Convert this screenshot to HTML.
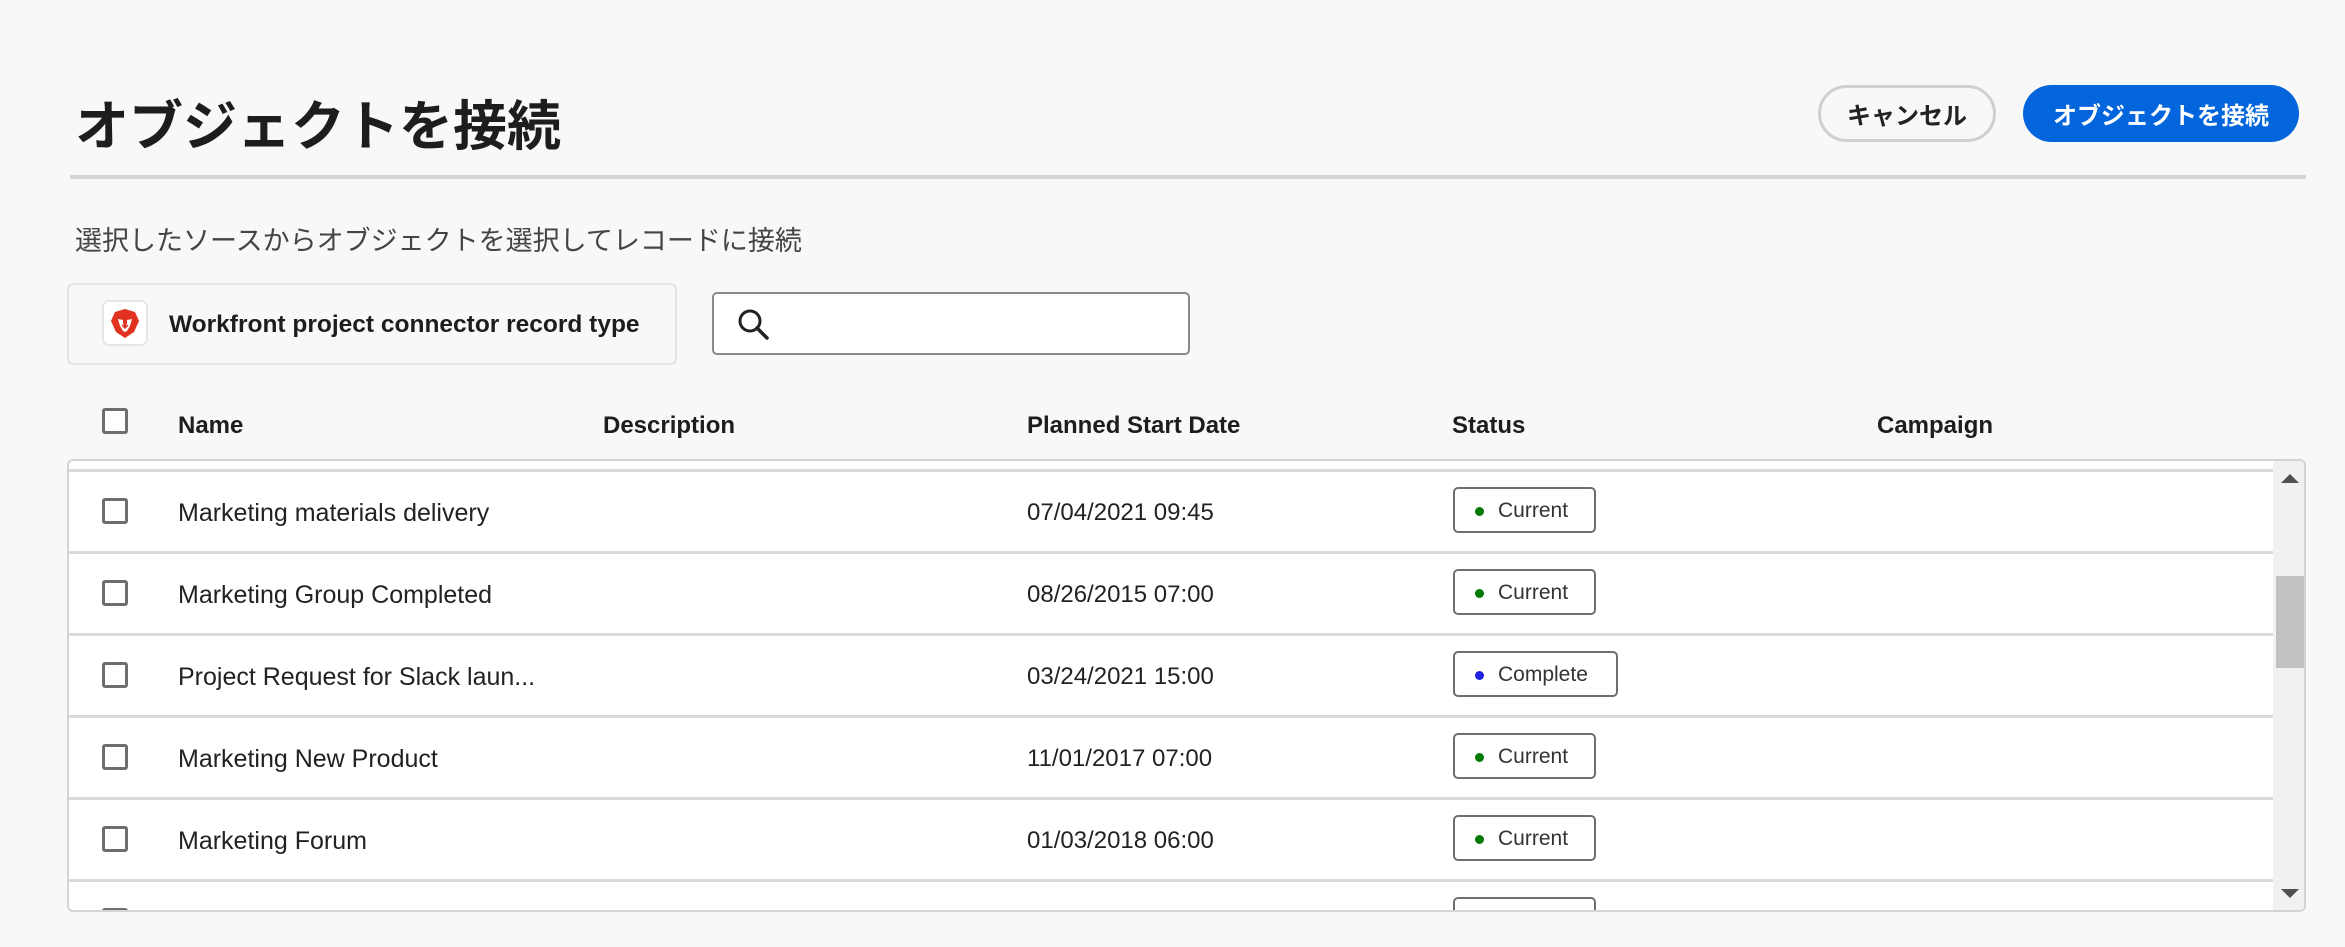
<!DOCTYPE html>
<html><head><meta charset="utf-8"><style>
*{margin:0;padding:0;box-sizing:border-box}
body{width:2345px;height:947px;background:#f8f8f8;font-family:"Liberation Sans","Noto Sans CJK JP",sans-serif;color:#222;position:relative;overflow:hidden}
.a{position:absolute}
.title{left:75px;top:92px;font-size:54px;font-weight:bold;color:#1d1d1d;line-height:70px;letter-spacing:0px}
.btn{top:85px;height:57px;border-radius:29px;font-weight:bold;font-size:24px;display:flex;align-items:center;justify-content:center}
.cancel{left:1818px;width:178px;border:3px solid #d0d0d0;background:#f8f8f8;color:#222}
.prim{left:2023px;width:276px;background:#0265dc;color:#fff}
.hr{left:70px;top:175px;width:2236px;height:4px;background:#d6d6d6}
.sub{left:75px;top:224px;font-size:27px;color:#444;line-height:34px}
.src{left:67px;top:283px;width:610px;height:82px;border:2px solid #e4e4e4;border-radius:6px;background:#f8f8f8}
.ico{left:33px;top:15px;width:46px;height:46px;border:2px solid #e6e6e6;border-radius:7px;background:#fff}
.srct{left:100px;top:1px;line-height:78px;font-size:24.5px;font-weight:bold;color:#1d1d1d}
.search{left:712px;top:292px;width:478px;height:63px;border:2px solid #8a8a8a;border-radius:5px;background:#fff}
.cb{width:26px;height:26px;border:3px solid #6e6e6e;border-radius:3px;background:#fff}
.th{top:411px;font-size:24px;font-weight:bold;color:#1d1d1d;line-height:30px}
.tbl{left:67px;top:459px;width:2239px;height:453px;border:2px solid #d4d4d4;border-radius:6px;background:#fff;overflow:hidden}
.line{left:0;width:2204px;height:3px;background:#dadada}
.name,.date{font-size:25px;color:#222;line-height:30px}
.date{font-size:24px}
.badge{height:46px;border:2px solid #6e6e6e;border-radius:5px;background:#fff;font-size:21px;color:#333;display:flex;align-items:center;padding-left:20px;padding-top:2px}
.dot{width:9px;height:9px;border-radius:50%;margin-right:14px}
.sb{left:2204px;top:0;width:35px;height:453px;background:#f1f1f1}
</style></head><body>
<div class="a title">オブジェクトを接続</div>
<div class="a btn cancel">キャンセル</div>
<div class="a btn prim">オブジェクトを接続</div>
<div class="a hr"></div>
<div class="a sub">選択したソースからオブジェクトを選択してレコードに接続</div>
<div class="a src">
  <div class="a ico"><svg width="42" height="42" viewBox="0 0 42 42" style="position:absolute;left:0;top:0"><path d="M21 7 L31 10 L35 19 L30 30 L21 36 L12 30 L7 19 L11 10 Z" fill="#e0321e"/><path d="M14 17 L19 18 L19 21 L21 27 L23 21 L23 18 L28 17 L26 24 L23 29 L21 30 L19 29 L16 24 Z" fill="#fff"/><path d="M18 23 L21 26 L24 23" stroke="#e0321e" stroke-width="1.5" fill="none"/></svg></div>
  <div class="a srct">Workfront project connector record type</div>
</div>
<div class="a search"><svg class="a" style="left:22px;top:13px" width="36" height="36" viewBox="0 0 36 36"><circle cx="14" cy="14" r="10" stroke="#222" stroke-width="3" fill="none"/><path d="M21 21 L31 31" stroke="#222" stroke-width="3.5" stroke-linecap="round"/></svg></div>

<div class="a cb" style="left:102px;top:408px"></div>
<div class="a th" style="left:178px">Name</div>
<div class="a th" style="left:603px">Description</div>
<div class="a th" style="left:1027px">Planned Start Date</div>
<div class="a th" style="left:1452px">Status</div>
<div class="a th" style="left:1877px">Campaign</div>

<div class="a tbl">
  <div class="a line" style="top:8px"></div>
  <div class="a line" style="top:90px"></div>
  <div class="a line" style="top:172px"></div>
  <div class="a line" style="top:254px"></div>
  <div class="a line" style="top:336px"></div>
  <div class="a line" style="top:418px"></div>

  <div class="a cb" style="left:33px;top:37px"></div>
  <div class="a name" style="left:109px;top:37px">Marketing materials delivery</div>
  <div class="a date" style="left:958px;top:37px">07/04/2021 09:45</div>
  <div class="a badge" style="left:1384px;top:26px;width:143px"><span class="dot" style="background:#007a00"></span>Current</div>

  <div class="a cb" style="left:33px;top:119px"></div>
  <div class="a name" style="left:109px;top:119px">Marketing Group Completed</div>
  <div class="a date" style="left:958px;top:119px">08/26/2015 07:00</div>
  <div class="a badge" style="left:1384px;top:108px;width:143px"><span class="dot" style="background:#007a00"></span>Current</div>

  <div class="a cb" style="left:33px;top:201px"></div>
  <div class="a name" style="left:109px;top:201px">Project Request for Slack laun...</div>
  <div class="a date" style="left:958px;top:201px">03/24/2021 15:00</div>
  <div class="a badge" style="left:1384px;top:190px;width:165px"><span class="dot" style="background:#2020e0"></span>Complete</div>

  <div class="a cb" style="left:33px;top:283px"></div>
  <div class="a name" style="left:109px;top:283px">Marketing New Product</div>
  <div class="a date" style="left:958px;top:283px">11/01/2017 07:00</div>
  <div class="a badge" style="left:1384px;top:272px;width:143px"><span class="dot" style="background:#007a00"></span>Current</div>

  <div class="a cb" style="left:33px;top:365px"></div>
  <div class="a name" style="left:109px;top:365px">Marketing Forum</div>
  <div class="a date" style="left:958px;top:365px">01/03/2018 06:00</div>
  <div class="a badge" style="left:1384px;top:354px;width:143px"><span class="dot" style="background:#007a00"></span>Current</div>

  <div class="a cb" style="left:33px;top:447px"></div>
  <div class="a badge" style="left:1384px;top:436px;width:143px"></div>

  <div class="a sb">
    <svg class="a" style="left:8px;top:12px" width="18" height="11"><path d="M0 10 L9 1 L18 10 Z" fill="#505050"/></svg>
    <div class="a" style="left:3px;top:115px;width:30px;height:92px;background:#c1c1c1"></div>
    <svg class="a" style="left:8px;top:427px" width="18" height="11"><path d="M0 1 L18 1 L9 10 Z" fill="#505050"/></svg>
  </div>
</div>
</body></html>
